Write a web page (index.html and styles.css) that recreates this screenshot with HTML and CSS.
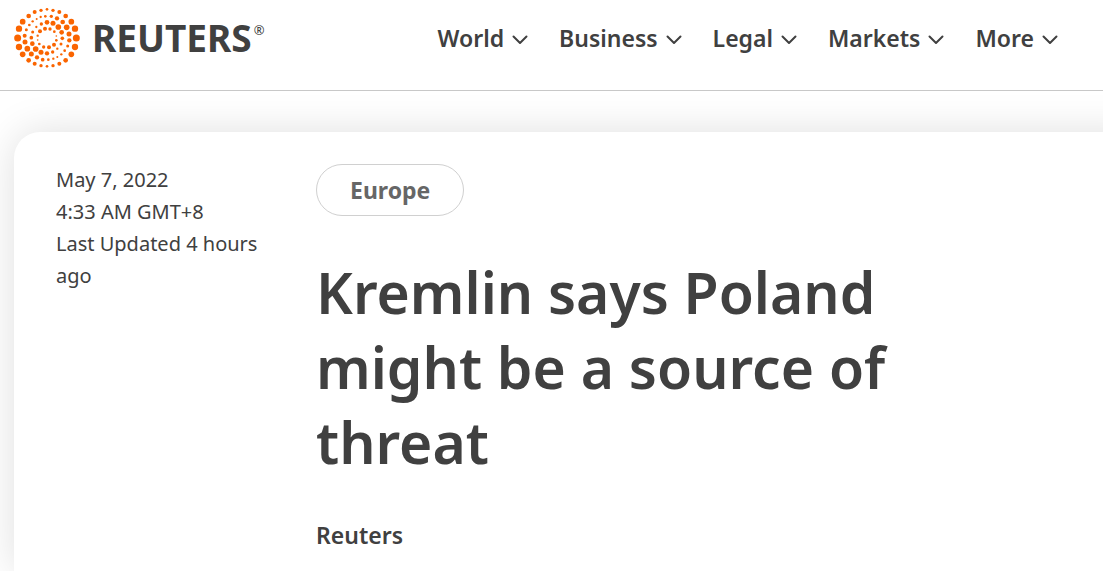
FILE: index.html
```html
<!DOCTYPE html>
<html lang="en">
<head>
  <meta charset="utf-8">
  <title>Kremlin says Poland might be a source of threat | Reuters</title>
  <meta name="viewport" content="width=device-width, initial-scale=1.0">
  <link rel="stylesheet" href="styles.css">
</head>
<body>
<header class="site-header">
  <a class="logo" href="#">
    <svg class="logo-mark" viewBox="42 23 198 180" aria-hidden="true">
      <!-- outer ring -->
      <g>
        <circle cx="141" cy="27" r="4"/>
        <circle cx="159" cy="30" r="5"/>
        <circle cx="178" cy="35" r="6"/>
        <circle cx="197" cy="47" r="7"/>
        <circle cx="214" cy="64" r="8.500"/>
        <circle cx="225" cy="85" r="9.500"/>
        <circle cx="229" cy="113" r="10.500"/>
        <circle cx="225" cy="140" r="9.500"/>
        <circle cx="214" cy="162" r="8.500"/>
        <circle cx="197" cy="180" r="7"/>
        <circle cx="178" cy="190" r="6"/>
        <circle cx="159" cy="196" r="5"/>
        <circle cx="141" cy="198" r="4"/>
        <circle cx="123" cy="196" r="5"/>
        <circle cx="104" cy="190" r="6"/>
        <circle cx="86" cy="180" r="7"/>
        <circle cx="68" cy="162" r="8.500"/>
        <circle cx="57" cy="140" r="9.500"/>
        <circle cx="53" cy="113" r="10.500"/>
        <circle cx="57" cy="85" r="9.500"/>
        <circle cx="68" cy="64" r="8.500"/>
        <circle cx="86" cy="47" r="7"/>
        <circle cx="104" cy="35" r="6"/>
        <circle cx="123" cy="30" r="5"/>
      </g>
      <!-- second ring -->
      <g>
        <circle cx="136" cy="48" r="4"/>
        <circle cx="154" cy="48" r="5"/>
        <circle cx="171" cy="54" r="6.500"/>
        <circle cx="188" cy="65" r="7"/>
        <circle cx="200" cy="81" r="8.500"/>
        <circle cx="207" cy="101" r="7.500"/>
        <circle cx="208" cy="120" r="6.500"/>
        <circle cx="203" cy="137" r="4.500"/>
        <circle cx="194" cy="151" r="4"/>
        <circle cx="184" cy="162" r="3.500"/>
        <circle cx="172" cy="170" r="3"/>
        <circle cx="160" cy="175" r="3.500"/>
        <circle cx="145" cy="178" r="4"/>
        <circle cx="128" cy="178" r="5.500"/>
        <circle cx="111" cy="171" r="6.500"/>
        <circle cx="94" cy="161" r="7.500"/>
        <circle cx="82" cy="145" r="8.500"/>
        <circle cx="75" cy="125" r="7.500"/>
        <circle cx="74" cy="106" r="6"/>
        <circle cx="79" cy="88" r="4.500"/>
        <circle cx="88" cy="74" r="4"/>
        <circle cx="98" cy="63" r="3.500"/>
        <circle cx="110" cy="56" r="3"/>
        <circle cx="122" cy="50" r="3.500"/>
      </g>
      <!-- third ring -->
      <g>
        <circle cx="124" cy="71" r="5"/>
        <circle cx="141" cy="66" r="7"/>
        <circle cx="159" cy="69" r="7.500"/>
        <circle cx="175" cy="80" r="8.500"/>
        <circle cx="185" cy="96" r="7"/>
        <circle cx="187" cy="114" r="5.500"/>
        <circle cx="183" cy="131" r="4.500"/>
        <circle cx="172" cy="145" r="3.500"/>
        <circle cx="158" cy="155" r="5"/>
        <circle cx="141" cy="159" r="6.500"/>
        <circle cx="123" cy="156" r="7.500"/>
        <circle cx="107" cy="146" r="8.500"/>
        <circle cx="97" cy="130" r="7"/>
        <circle cx="94" cy="112" r="5.500"/>
        <circle cx="98" cy="95" r="4.500"/>
        <circle cx="109" cy="80" r="3.500"/>
      </g>
      <!-- inner ring -->
      <g>
        <circle cx="120" cy="93" r="6"/>
        <circle cx="135" cy="85" r="6"/>
        <circle cx="150" cy="86" r="5"/>
        <circle cx="163" cy="94" r="4"/>
        <circle cx="169" cy="107" r="2.500"/>
        <circle cx="169" cy="120" r="4"/>
        <circle cx="162" cy="133" r="6"/>
        <circle cx="147" cy="141" r="6"/>
        <circle cx="131" cy="140" r="5"/>
        <circle cx="118" cy="131" r="4"/>
        <circle cx="113" cy="119" r="2.500"/>
        <circle cx="113" cy="106" r="3.500"/>
      </g>
    </svg>
    <span class="logo-name">REUTERS</span>
    <span class="logo-reg">®</span>
  </a>
  <nav class="main-nav">
    <button type="button">World <svg viewBox="0 0 16 10"><path d="M1.500 1.500 8 8l6.500-6.500"/></svg></button>
    <button type="button">Business <svg viewBox="0 0 16 10"><path d="M1.500 1.500 8 8l6.500-6.500"/></svg></button>
    <button type="button">Legal <svg viewBox="0 0 16 10"><path d="M1.500 1.500 8 8l6.500-6.500"/></svg></button>
    <button type="button">Markets <svg viewBox="0 0 16 10"><path d="M1.500 1.500 8 8l6.500-6.500"/></svg></button>
    <button type="button">More <svg viewBox="0 0 16 10"><path d="M1.500 1.500 8 8l6.500-6.500"/></svg></button>
  </nav>
</header>
<main>
  <article class="article">
    <div class="article-date">
      <time datetime="2022-05-07">May 7, 2022</time>
      <span>4:33 AM GMT+8</span>
      <span>Last Updated 4 hours ago</span>
    </div>
    <div class="article-head">
      <a class="tag" href="#">Europe</a>
      <h1>Kremlin says Poland might be a source of threat</h1>
      <p class="author">Reuters</p>
    </div>
  </article>
</main>
</body>
</html>
```
FILE: styles.css
```css
*, *:before, *:after {
  box-sizing: border-box;
}

body {
  margin: 0;
  min-height: 100vh;
  display: flex;
  flex-direction: column;
  background: #fff;
  color: #404040;
  font-family: 'Noto Sans', 'Open Sans', sans-serif;
}

a {
  color: inherit;
  text-decoration: none;
}

.site-header {
  display: flex;
  align-items: center;
  justify-content: space-between;
  padding: 8px 45px 22px 14px;
  border-bottom: 1px solid #c8c8c8;
}

.logo {
  display: flex;
  align-items: center;
}

.logo-mark {
  width: 66px;
  height: 60px;
  fill: #fa6400;
}

.logo-name {
  margin-left: 12px;
  font-size: 37px;
  font-weight: 700;
  line-height: 60px;
}

.logo-reg {
  align-self: flex-start;
  margin-left: 2px;
  font-size: 13px;
  line-height: 44px;
}

.main-nav {
  display: flex;
  gap: 31px;
}

.main-nav button {
  display: flex;
  align-items: center;
  gap: 8px;
  padding: 0;
  border: 0;
  background: none;
  color: inherit;
  font: inherit;
  font-size: 23px;
  font-weight: 600;
  line-height: 32px;
  cursor: pointer;
}

.main-nav svg {
  width: 16px;
  height: 10px;
  margin-top: 4px;
  fill: none;
  stroke: #404040;
  stroke-width: 2;
  stroke-linecap: round;
  stroke-linejoin: round;
}

main {
  flex: 1;
  display: flex;
  padding: 41px 0 0 14px;
  overflow: hidden;
}

/* the card runs off the right edge of the window */
.article {
  flex: 1;
  display: grid;
  grid-template-columns: 216px 1fr;
  gap: 44px;
  margin-right: -40px;
  padding: 32px 82px 16px 42px;
  border-radius: 26px 0 0 0;
  background: #fff;
  box-shadow: 0 0 40px rgba(0, 0, 0, .13);
}

.article-date {
  display: flex;
  flex-direction: column;
  font-size: 20px;
  line-height: 32px;
}

.tag {
  display: inline-block;
  padding: 0 33px;
  border: 1px solid #d0d0d0;
  border-radius: 26px;
  color: #666;
  font-size: 23px;
  font-weight: 700;
  line-height: 50px;
}

h1 {
  max-width: 640px;
  margin: 39px 0;
  font-size: 57px;
  font-weight: 600;
  line-height: 75px;
}

.author {
  margin: 0;
  font-size: 23px;
  font-weight: 600;
  line-height: 33px;
}
```
